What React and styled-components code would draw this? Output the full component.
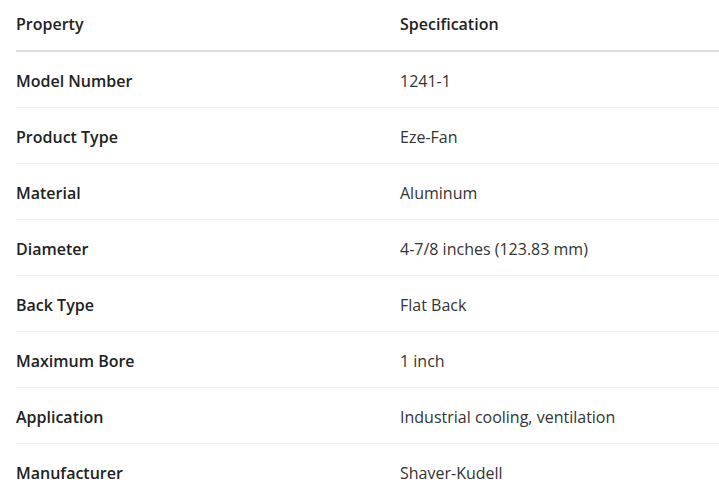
import styled, { createGlobalStyle } from "styled-components";

const GlobalStyle = createGlobalStyle`
    body {
        margin: 0;
        background: #ffffff;
        font-family: 'Open Sans', 'Noto Sans', sans-serif;
    }
`

const specs = [
    ["Model Number", "1241-1"],
    ["Product Type", "Eze-Fan"],
    ["Material", "Aluminum"],
    ["Diameter", "4-7/8 inches (123.83 mm)"],
    ["Back Type", "Flat Back"],
    ["Maximum Bore", "1 inch"],
    ["Application", "Industrial cooling, ventilation"],
    ["Manufacturer", "Shaver-Kudell"],
]

export default function App() {
    return (
        <Wrapper>
            <GlobalStyle />
            <Table>
                <colgroup>
                    <col style={{ width: "384px" }} />
                    <col />
                </colgroup>
                <thead>
                    <tr>
                        <Th>Property</Th>
                        <Th>Specification</Th>
                    </tr>
                </thead>
                <tbody>
                    {specs.map(([label, value]) => (
                        <Row key={label}>
                            <Label>{label}</Label>
                            <Value>{value}</Value>
                        </Row>
                    ))}
                </tbody>
            </Table>
        </Wrapper>
    )
}

const Wrapper = styled.div`
    padding-left: 16px;
    `
const Table = styled.table`
    width: 100%;
    border-collapse: collapse;
    table-layout: fixed;
    font-size: 16px;
    color: #333;
    `
const Th = styled.th`
    text-align: left;
    font-weight: 600;
    color: #222;
    line-height: 22px;
    padding: 13px 0 15px 0;
    border-bottom: 2px solid #dddddd;
    `
const Row = styled.tr`
    border-bottom: 1px solid #eeeeee;
    &:last-child {
        border-bottom: none;
    }
    `
const Label = styled.td`
    font-weight: 600;
    color: #222;
    line-height: 22px;
    padding: 18px 0 15px 0;
    `
const Value = styled.td`
    line-height: 22px;
    padding: 18px 0 15px 0;
    `
